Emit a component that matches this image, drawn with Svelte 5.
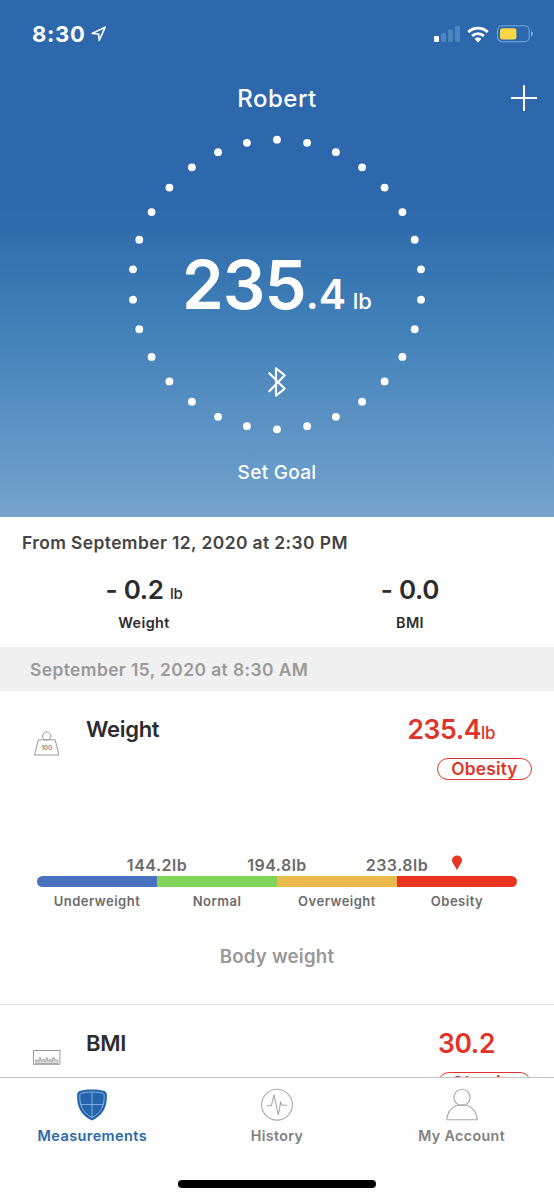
<script>
    const dots = Array.from({ length: 30 }, (_, i) => {
        const angle = (i * 12 * Math.PI) / 180;
        return { x: 157 + 144.8 * Math.sin(angle), y: 156.5 - 144.8 * Math.cos(angle) };
    });

    const ranges = [
        { name: "Underweight", color: "#4a70c0" },
        { name: "Normal", color: "#82d45b" },
        { name: "Overweight", color: "#eabb4c" },
        { name: "Obesity", color: "#e93323" },
    ];
    const limits = ["144.2lb", "194.8lb", "233.8lb"];
</script>

<div class="screen">
    <header>
        <div class="status">
            <span class="clock">8:30</span>
            <svg class="location" width="16" height="16" viewBox="0 0 16 16">
                <path d="M1.2 7.4 L14.2 1.2 L8.2 14.4 L7.6 8 Z" />
            </svg>
            <svg class="signal" width="26" height="16" viewBox="0 0 26 16">
                <rect x="0" y="10" width="5" height="6" rx="1.2" fill="#fff" />
                <rect x="7" y="7" width="5" height="9" rx="1.2" fill="#4c86be" />
                <rect x="14" y="3.5" width="5" height="12.5" rx="1.2" fill="#4c86be" />
                <rect x="21" y="0" width="5" height="16" rx="1.2" fill="#4c86be" />
            </svg>
            <svg class="wifi" width="22" height="17" viewBox="0 0 22 17">
                <path d="M1.3 6.1 A13.8 13.8 0 0 1 20.7 6.1" />
                <path d="M5.1 10 A8.4 8.4 0 0 1 16.9 10" />
                <path class="tip" d="M7.6 12.8 A5 5 0 0 1 14.4 12.8 L11.6 16 Q11 16.6 10.4 16 Z" />
            </svg>
            <svg class="battery" width="37" height="18" viewBox="0 0 37 18">
                <rect x="0.6" y="0.8" width="31.6" height="16" rx="4.5" fill="none" stroke="#75a9d9" stroke-width="1.1" />
                <rect x="3" y="3.2" width="16.4" height="11.2" rx="2.2" fill="#f9d749" />
                <path d="M34 6 Q36 6.5 36 8.8 Q36 11.1 34 11.6 Z" fill="#75a9d9" />
            </svg>
        </div>

        <div class="title">
            <span class="user">Robert</span>
            <svg class="add" width="28" height="28" viewBox="0 0 28 28">
                <path d="M14 1 V27 M1 14 H27" />
            </svg>
        </div>

        <div class="gauge">
            <svg class="ring" width="314" height="313" viewBox="0 0 314 313">
                {#each dots as dot}
                    <circle cx={dot.x} cy={dot.y} r="3.9" />
                {/each}
            </svg>
            <div class="reading">
                <div class="number">
                    <span class="whole">235</span><span class="decimal">.4</span><span class="unit">lb</span>
                </div>
                <svg class="bluetooth" width="20" height="32" viewBox="0 0 20 32">
                    <path d="M2.3 7.2 L17.7 22.7 L9 29.6 V2.4 L17.7 9.3 L2.3 25.2" />
                </svg>
            </div>
        </div>
        <div class="goal">Set Goal</div>
    </header>

    <main>
        <section class="change">
            <div class="since">From September 12, 2020 at 2:30 PM</div>
            <div class="deltas">
                <div class="delta first">
                    <div class="amount">- 0.2 <small>lb</small></div>
                    <div class="what">Weight</div>
                </div>
                <div class="delta">
                    <div class="amount">- 0.0</div>
                    <div class="what">BMI</div>
                </div>
            </div>
        </section>

        <div class="date">September 15, 2020 at 8:30 AM</div>

        <section class="item">
            <div class="top">
                <svg class="icon" width="28" height="26" viewBox="0 0 28 26">
                    <circle cx="13.7" cy="5.1" r="4.2" />
                    <path d="M5.4 8.8 H22.2 L25.8 24 H1.5 Z" />
                    <text x="13.7" y="19">100</text>
                </svg>
                <h2>Weight</h2>
                <div class="result">
                    <div class="value">235.4<small>lb</small></div>
                    <div class="pill">Obesity</div>
                </div>
            </div>
            <div class="limits">
                {#each limits as limit}
                    <span>{limit}</span>
                {/each}
                <svg class="pin" width="12" height="16" viewBox="0 0 12 16">
                    <path d="M6 15.5 C5.2 12 1 8.5 1 5.2 A5 4.7 0 0 1 11 5.2 C11 8.5 6.8 12 6 15.5 Z" />
                </svg>
            </div>
            <div class="bar">
                {#each ranges as range}
                    <i style="background: {range.color}"></i>
                {/each}
            </div>
            <div class="names">
                {#each ranges as range}
                    <span>{range.name}</span>
                {/each}
            </div>
            <div class="about">Body weight</div>
        </section>

        <section class="item">
            <div class="top">
                <svg class="icon" width="28" height="26" viewBox="0 0 28 26">
                    <rect x="0.5" y="5.5" width="26.4" height="13.8" />
                    <path d="M2.5 18.5 V15 H4.5 V16.5 H6.2 V12.9 H8 V15.9 H9.8 V14.5 H11.6 V16.5 H13 V12.9 H14.6 V15.9 H16.4 V14.5 H18 V16.5 H19.6 V12.9 H21.4 V15 H24.8 V18.5 Z" class="ticks" />
                </svg>
                <h2>BMI</h2>
                <div class="result">
                    <div class="value">30.2</div>
                    <div class="pill second">Obesity</div>
                </div>
            </div>
        </section>
    </main>

    <nav>
        <div class="tabs">
            <div class="tab active">
                <svg width="34" height="34" viewBox="0 0 34 34">
                    <path class="shield" d="M17 1.4 C23 1.4 27 2 29.5 3 C31 3.8 31.9 5 31.9 7 C32.3 19 28 27.5 17 32.4 C6 27.5 1.7 19 2.1 7 C2.1 5 3 3.8 4.5 3 C7 2 11 1.4 17 1.4 Z" />
                    <path class="lines" d="M17 4 C22 4 25.5 4.5 27.6 5.2 C28.8 5.7 29.2 6.5 29.2 8 C29.3 18 26 25 17 29.5 C8 25 4.7 18 4.8 8 C4.8 6.5 5.2 5.7 6.4 5.2 C8.5 4.5 12 4 17 4 Z M17 4 V29.5 M5.3 16.6 H28.7" />
                </svg>
                <span>Measurements</span>
            </div>
            <div class="tab">
                <svg width="34" height="34" viewBox="0 0 34 34">
                    <circle cx="17" cy="16.7" r="15.4" />
                    <path d="M6.5 17.8 H11.3 L14 6.7 L18.3 27 L20.7 14.2 L22.2 17.3 H27.2" />
                </svg>
                <span>History</span>
            </div>
            <div class="tab">
                <svg width="34" height="34" viewBox="0 0 34 34">
                    <circle cx="17" cy="9.4" r="8.1" />
                    <path d="M11.6 17.5 Q2.6 21 1.8 31.8 H32.4 Q31.4 21 22.4 17.5 Q17 16.1 11.6 17.5 Z" />
                </svg>
                <span>My Account</span>
            </div>
        </div>
        <div class="home"></div>
    </nav>
</div>

<style>
    :global(body) {
        margin: 0;
        background: #fff;
    }

    .screen {
        display: flex;
        flex-direction: column;
        width: 554px;
        height: 1200px;
        overflow: hidden;
        font-family: Inter, "Liberation Sans", sans-serif;
        font-weight: 600;
        color: #2c2c2e;
        background: #fff;
    }

    header {
        flex: none;
        height: 517px;
        color: #fff;
        background: linear-gradient(#2c68ab 0, #2c68ab 205px, #4180b8 325px, #74a3cd 517px);
    }

    .status {
        display: flex;
        align-items: center;
        box-sizing: border-box;
        height: 68px;
        padding: 0 20px 0 32px;
    }
    .clock {
        font-size: 22px;
        font-weight: 700;
        letter-spacing: 0.7px;
    }
    .location {
        margin-left: 5px;
    }
    .location path {
        fill: none;
        stroke: #fff;
        stroke-width: 1.6;
        stroke-linejoin: round;
    }
    .signal {
        margin-left: auto;
    }
    .wifi {
        margin: 0 8px 0 7px;
    }
    .wifi path {
        fill: none;
        stroke: #fff;
        stroke-width: 2.9;
    }
    .wifi .tip {
        fill: #fff;
        stroke: none;
    }

    .title {
        display: grid;
        grid-template-columns: 1fr auto 1fr;
        align-items: center;
        height: 60px;
        padding: 0 16px;
    }
    .user {
        grid-column: 2;
        font-size: 24px;
        font-weight: 500;
        letter-spacing: 0.5px;
    }
    .add {
        justify-self: end;
    }
    .add path {
        stroke: #fff;
        stroke-width: 2;
    }

    .gauge {
        display: grid;
        justify-items: center;
    }
    .ring,
    .reading {
        grid-area: 1 / 1;
    }
    .ring {
        display: block;
        fill: #fff;
    }
    .reading {
        display: flex;
        flex-direction: column;
        align-items: center;
        padding-top: 117px;
    }
    .number {
        display: flex;
        align-items: baseline;
        height: 80px;
        line-height: 80px;
    }
    .whole {
        font-size: 67px;
        letter-spacing: -0.9px;
    }
    .decimal {
        font-size: 41px;
        letter-spacing: -0.2px;
    }
    .unit {
        margin-left: 7px;
        font-size: 22px;
        font-weight: 500;
    }
    .bluetooth {
        margin-top: 41px;
        fill: none;
        stroke: #fff;
        stroke-width: 2.1;
        stroke-linecap: round;
        stroke-linejoin: round;
    }
    .goal {
        line-height: 63px;
        text-align: center;
        font-size: 19px;
        font-weight: 500;
        letter-spacing: 0.3px;
    }

    main {
        flex: 1;
        min-height: 0;
        overflow: hidden;
    }

    .change {
        height: 130px;
    }
    .since {
        padding-left: 22px;
        line-height: 52px;
        font-size: 17.4px;
        letter-spacing: 0.42px;
        color: #444;
    }
    .deltas {
        display: grid;
        grid-template-columns: 1fr 1fr;
        text-align: center;
    }
    .delta {
        padding-right: 11px;
    }
    .delta.first {
        padding: 0 0 0 11px;
    }
    .amount {
        line-height: 42px;
        font-size: 26px;
        letter-spacing: -0.3px;
    }
    .amount small,
    .value small {
        line-height: 1;
        font-weight: 500;
    }
    .amount small {
        font-size: 15px;
    }
    .what {
        line-height: 23px;
        font-size: 14.4px;
        letter-spacing: 0.4px;
    }
    .date {
        height: 44px;
        padding-left: 30px;
        line-height: 46px;
        font-size: 17.4px;
        letter-spacing: 0.42px;
        color: #999;
        background: #f0f0f0;
    }

    .item {
        box-sizing: border-box;
        height: 314px;
        border-bottom: 1px solid #e2e2e2;
    }
    .top {
        display: flex;
        height: 164px;
        padding: 0 22px 0 33px;
    }
    .icon {
        margin-top: 40px;
        fill: none;
        stroke: #999;
        stroke-width: 1;
    }
    .icon text {
        fill: #888;
        stroke: none;
        text-anchor: middle;
        font-size: 6.4px;
    }
    .icon .ticks {
        fill: #ddd;
        stroke-width: 0.8;
    }
    h2 {
        margin: 17px 0 0 25px;
        line-height: 42px;
        font-size: 22px;
        font-weight: 600;
        letter-spacing: -0.3px;
    }
    .result {
        display: flex;
        flex-direction: column;
        align-items: flex-end;
        margin-left: auto;
        color: #e0342a;
    }
    .value {
        height: 42px;
        margin: 17px 37px 8px 0;
        line-height: 42px;
        font-size: 26.5px;
        letter-spacing: -0.4px;
    }
    .value small {
        font-size: 17px;
    }
    .pill {
        box-sizing: border-box;
        width: 95px;
        height: 22px;
        border: 1.5px solid #e0342a;
        border-radius: 11px;
        line-height: 20px;
        text-align: center;
        font-size: 17.3px;
        letter-spacing: 0.2px;
    }
    .pill.second {
        width: 93px;
        margin-right: 1px;
    }

    .limits {
        display: grid;
        grid-template-columns: repeat(4, 120px);
        justify-items: center;
        height: 21px;
        margin-left: 97px;
        line-height: 20px;
        font-size: 16px;
        letter-spacing: 0.5px;
        color: #6b6b6b;
    }
    /* the labels sit on range borders, the pin in the middle of the last range */
    .pin {
        margin-right: 120px;
        fill: #e93323;
    }
    .bar {
        display: flex;
        height: 11px;
        margin: 0 37px;
        border-radius: 5.5px;
        overflow: hidden;
    }
    .bar i {
        flex: 1;
    }
    .names {
        display: grid;
        grid-template-columns: repeat(4, 1fr);
        margin: 0 37px;
        text-align: center;
        line-height: 28px;
        font-size: 13px;
        letter-spacing: 0.5px;
        color: #6b6b6b;
    }
    .about {
        margin-top: 22px;
        line-height: 40px;
        text-align: center;
        font-size: 18.7px;
        letter-spacing: 0.2px;
        color: #999;
    }

    nav {
        display: flex;
        flex-direction: column;
        flex: none;
        align-items: center;
        box-sizing: border-box;
        height: 123px;
        border-top: 1px solid #c4c4c4;
        background: #fdfdfd;
    }
    .tabs {
        display: grid;
        grid-template-columns: repeat(3, 1fr);
        width: 100%;
        height: 102px;
        padding-top: 10px;
        box-sizing: border-box;
    }
    .tab {
        display: flex;
        flex-direction: column;
        align-items: center;
        font-size: 14.2px;
        letter-spacing: 0.4px;
        color: #808080;
    }
    .tab span {
        line-height: 28px;
    }
    .tab svg {
        fill: none;
        stroke: #aaa;
        stroke-width: 1.1;
    }
    .tab.active {
        font-size: 14.5px;
        color: #2c68ab;
    }
    .tab .shield {
        fill: #2565ae;
        stroke: none;
    }
    .tab .lines {
        stroke: #8db6e0;
        stroke-width: 0.9;
    }
    .home {
        width: 198px;
        height: 8px;
        border-radius: 4px;
        background: #000;
    }
</style>
